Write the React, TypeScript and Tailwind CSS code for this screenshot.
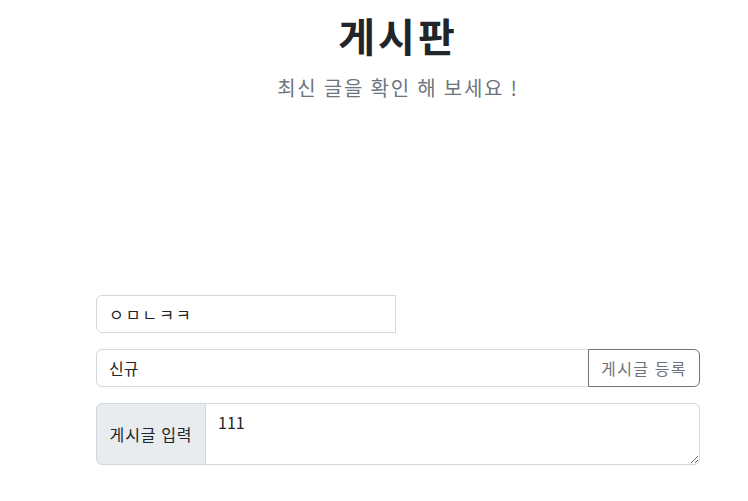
const font = "font-['Noto_Sans_CJK_KR','Noto_Sans',sans-serif]";

export default function App() {
  return (
    <div className={`${font} min-h-[501px] bg-white text-[#212529]`}>
      <div className="ml-[96px] w-[604px]">
        <div className="pt-[11px] text-center">
          <h1 className="text-[40px] font-bold leading-[48px] tracking-[3px]">게시판</h1>
          <p className="mt-[14px] text-[20px] leading-[30px] tracking-[1.8px] text-[#6c757d]">최신 글을 확인 해 보세요 !</p>
        </div>

        <div className="mt-[192px] flex flex-col gap-4">
          <input
            defaultValue="ㅇㅁㄴㅋㅋ"
            className="h-[38px] w-[300px] rounded-l-[6px] border border-[#d3d7dc] px-3 text-[16px] tracking-[2px] outline-none"
          />

          <div className="flex h-[38px]">
            <input
              defaultValue="신규"
              className="min-w-0 flex-1 rounded-l-[6px] border border-[#d3d7dc] px-3 text-[16px] outline-none"
            />
            <button className="-ml-px w-[112px] rounded-r-[6px] border border-[#6c757d] text-[16px] tracking-[1.5px] text-[#6c757d]">
              게시글 등록
            </button>
          </div>

          <div className="flex h-[62px]">
            <span className="flex w-[110px] items-center justify-center rounded-l-[6px] border border-[#d3d7dc] bg-[#e9ecef] text-[16px] tracking-[1px]">
              게시글 입력
            </span>
            <textarea
              defaultValue="111"
              className="-ml-px flex-1 rounded-r-[6px] border border-[#d3d7dc] px-3 py-[6px] text-[16px] leading-6 outline-none"
            />
          </div>
        </div>
      </div>
    </div>
  );
}
